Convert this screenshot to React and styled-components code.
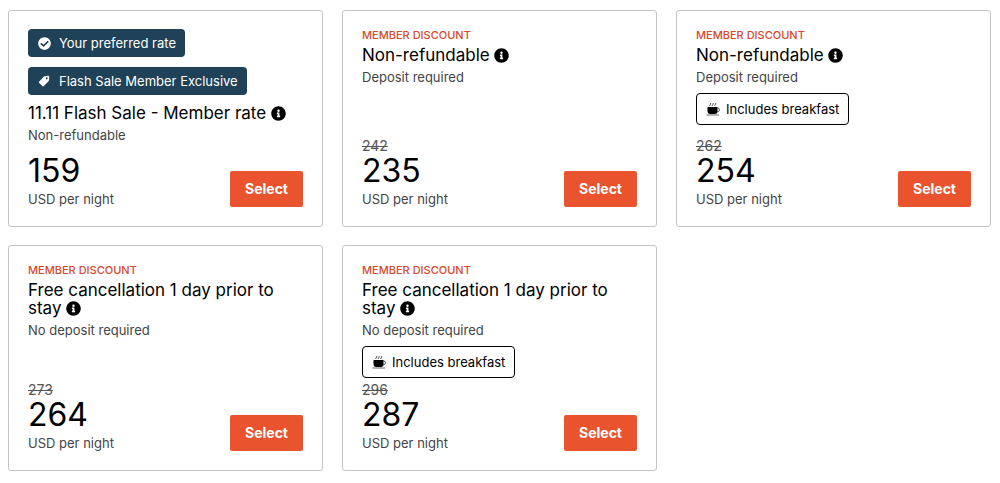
import React from "react";
import styled, { createGlobalStyle } from "styled-components";
import { FaCheckCircle, FaInfoCircle } from "react-icons/fa";

const rates = [
    {
        id: 1,
        badges: ["preferred", "flash"],
        title: "11.11 Flash Sale - Member rate",
        terms: "Non-refundable",
        price: 159,
    },
    { id: 2, title: "Non-refundable", terms: "Deposit required", was: 242, price: 235 },
    { id: 3, title: "Non-refundable", terms: "Deposit required", breakfast: true, was: 262, price: 254 },
    { id: 4, title: "Free cancellation 1 day prior to stay", terms: "No deposit required", was: 273, price: 264 },
    { id: 5, title: "Free cancellation 1 day prior to stay", terms: "No deposit required", breakfast: true, was: 296, price: 287 },
];

const TagIcon = () => (
    <svg width="12" height="12" viewBox="0 0 24 24" aria-hidden="true">
        <path
            fillRule="evenodd"
            d="M13 2.5 20 1.5q2.5 0 2.5 2.5L22 10.5q-.2 1-1 2L11.5 22q-1.500 1.500-3 0L2.500 16q-1.500-1.500 0-3L11.500 3.500q.7-.8 1.500-1zM17.500 4.500a2 2 0 1 0 .01 0z"
            fill="#fff"
        />
    </svg>
);

const CupIcon = () => (
    <svg width="14" height="14" viewBox="0 0 28 28" fill="none" aria-hidden="true">
        <path d="M8 8c-2-2 3-3 1-6M13 8c-2-2 3-3 1-6M18 8c-2-2 3-3 1-6" stroke="#000" strokeWidth="1.4" />
        <path d="M3 10h20v8c0 4-2 6-5 6H8c-3 0-5-2-5-6z" fill="#000" />
        <path d="M23 12h1c4 0 4 8-2 8" stroke="#000" strokeWidth="1.4" />
        <path d="M1 26h25" stroke="#000" strokeWidth="1.2" />
    </svg>
);

const badgeTypes = {
    preferred: { icon: <FaCheckCircle size={13} />, text: "Your preferred rate" },
    flash: { icon: <TagIcon />, text: "Flash Sale Member Exclusive" },
};

const RateTitle = ({ text }) => {
    // the last word stays on one line with the info icon
    const cut = text.lastIndexOf(" ") + 1;

    return (
        <Title>
            {text.slice(0, cut)}
            <LastWord>
                {text.slice(cut)}{" "}
                <InfoButton type="button" aria-label="Rate details">
                    <FaInfoCircle size={15} />
                </InfoButton>
            </LastWord>
        </Title>
    );
};

const RateCard = ({ rate }) => {
    return (
        <Card>
            {rate.badges ? (
                <Badges>
                    {rate.badges.map((type) => (
                        <Badge key={type}>
                            <BadgeIcon>{badgeTypes[type].icon}</BadgeIcon>
                            {badgeTypes[type].text}
                        </Badge>
                    ))}
                </Badges>
            ) : (
                <Discount>MEMBER DISCOUNT</Discount>
            )}
            <RateTitle text={rate.title} />
            <Terms>{rate.terms}</Terms>
            {rate.breakfast && (
                <Perk>
                    <CupIcon />
                    Includes breakfast
                </Perk>
            )}
            <Footer $discounted={!!rate.was}>
                <div>
                    {rate.was && <OldPrice>{rate.was}</OldPrice>}
                    <Price>{rate.price}</Price>
                    <Unit>USD per night</Unit>
                </div>
                <SelectButton type="button">Select</SelectButton>
            </Footer>
        </Card>
    );
};

const App = () => {
    return (
        <>
            <GlobalStyle />
            <RateGrid>
                {rates.map((rate) => (
                    <RateCard key={rate.id} rate={rate} />
                ))}
            </RateGrid>
        </>
    );
};

const GlobalStyle = createGlobalStyle`
* {
    box-sizing: border-box;
}

body {
    margin: 0;
    background: #fff;
    color: #000;
    font-family: Inter, "Liberation Sans", sans-serif;
}
`;

const RateGrid = styled.main`
display: grid;
grid-template-columns: repeat(3, 1fr);
gap: 18px 19px;
padding: 10px 9px 12px 8px;
`;

const Card = styled.article`
display: flex;
flex-direction: column;
align-items: flex-start;
padding: 18px 19px;
border: 1px solid #c4c4c4;
border-radius: 3px;
`;

const Badges = styled.div`
display: flex;
flex-direction: column;
align-items: flex-start;
gap: 10px;
margin-bottom: 9px;
`;

const Badge = styled.div`
display: flex;
align-items: center;
height: 28px;
padding: 0 9px;
border-radius: 4px;
background: #1f4258;
color: #fff;
font-size: 13px;
`;

const BadgeIcon = styled.span`
display: flex;
justify-content: center;
width: 14px;
margin-right: 8px;
`;

const Discount = styled.div`
margin-bottom: 5px;
color: #d9482b;
font-size: 11px;
font-weight: 500;
line-height: 12px;
`;

const Title = styled.h3`
margin: 0;
font-size: 17px;
font-weight: 400;
line-height: 18px;
`;

const LastWord = styled.span`
white-space: nowrap;
`;

const InfoButton = styled.button`
display: inline-flex;
padding: 0;
border: 0;
background: none;
color: #000;
vertical-align: -2px;
cursor: pointer;
`;

const Terms = styled.div`
margin-top: 4px;
color: #444;
font-size: 13px;
line-height: 18px;
`;

const Perk = styled.div`
display: flex;
align-items: center;
gap: 6px;
height: 32px;
margin-top: 7px;
padding: 0 9px;
border: 1px solid #000;
border-radius: 4px;
font-size: 13px;
`;

const Footer = styled.div`
display: flex;
align-items: flex-end;
justify-content: space-between;
align-self: stretch;
margin-top: auto;
padding-top: ${(props) => (props.$discounted ? 4 : 11)}px;
`;

const OldPrice = styled.s`
display: block;
margin-bottom: 1px;
color: #555;
font-size: 14px;
line-height: 16px;
`;

const Price = styled.div`
margin-bottom: 3px;
font-size: 32px;
line-height: 32px;
`;

const Unit = styled.div`
color: #444;
font-size: 13px;
line-height: 18px;
`;

const SelectButton = styled.button`
width: 73px;
height: 36px;
margin-bottom: 1px;
padding: 0 0 2px;
border: 0;
border-radius: 2px;
background: #e9532d;
color: #fff;
font-family: inherit;
font-size: 14px;
font-weight: 700;
cursor: pointer;
`;

export default App;
